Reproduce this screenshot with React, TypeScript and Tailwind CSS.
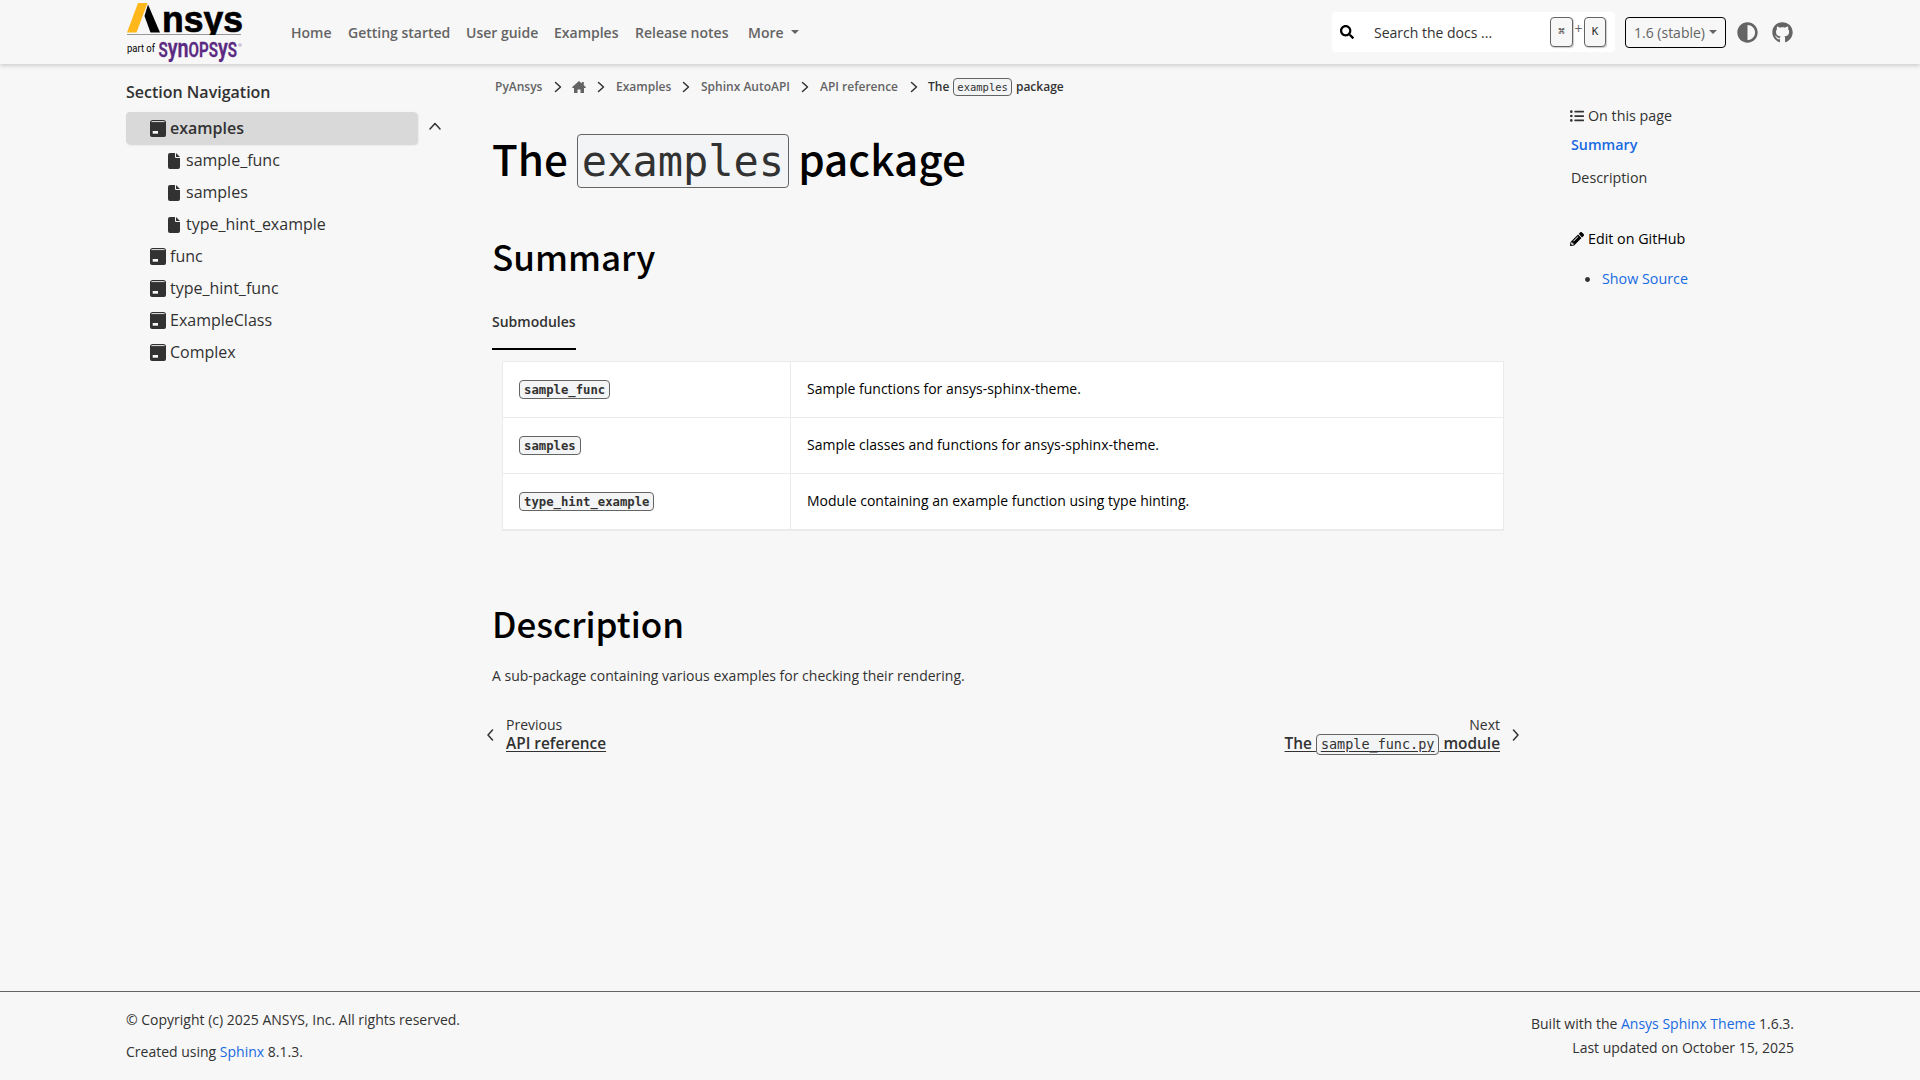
import React from "react";
import { FaCircle, FaGithub, FaListUl, FaPencilAlt, FaSearch, FaAdjust } from "react-icons/fa";

const Caret = ({ className = "" }: { className?: string }) => (
  <span className={`inline-block h-0 w-0 border-x-4 border-t-4 border-x-transparent border-t-[#646464] ${className}`} />
);

const Chevron = ({ d, className = "" }: { d: string; className?: string }) => (
  <svg viewBox="0 0 12 12" className={className} fill="none" stroke="currentColor" strokeWidth="1.5" strokeLinecap="round" strokeLinejoin="round">
    <path d={d} />
  </svg>
);

const PackageIcon = () => (
  <svg viewBox="0 0 16 17" className="mt-px h-[17px] w-4 shrink-0">
    <path d="M2.5 0h11C15 0 16 1.2 16 2.6V15q0 2-2 2H2q-2 0-2-2V2.600C0 1.2 1 0 2.500 0Z" fill="#323232" />
    <path d="M1.500 1.600h13" stroke="#f7f7f7" strokeWidth=".9" />
    <path d="M2.700 11h5.300v2.700H2.700Z" fill="#f7f7f7" />
  </svg>
);

const FileIcon = () => (
  <svg viewBox="0 0 12 16" className="mt-px h-4 w-3 shrink-0" fill="#323232">
    <path d="M2 0h5v4q0 1 1 1h4v9q0 2-2 2H2q-2 0-2-2V2Q0 0 2 0Z" />
    <path d="M8 0l4 4H8Z" />
  </svg>
);

const HomeIcon = () => (
  <svg viewBox="0 0 14 12" className="ml-[8px] h-3 w-[14px] shrink-0" fill="#646464">
    <path d="M7 0 9.800 2.500V1h2v3.300L14 6.300 13.300 7H12v5H8.500V8.500h-3V12H2V7H.7L0 6.300Z" />
  </svg>
);

const Code = ({ children, className = "" }: { children: React.ReactNode; className?: string }) => (
  <code className={`inline-block rounded-[4px] border border-[#646464] bg-[#f3f4f5] font-['DejaVu_Sans_Mono',monospace] text-[#323232] ${className}`}>{children}</code>
);

const Logo = () => (
  <svg viewBox="0 0 118 60" className="h-[60px] w-[118px] shrink-0 overflow-visible">
    <defs>
      <clipPath id="wordmark"><path d="M0-10h118v42H0Z" /></clipPath>
    </defs>
    <path d="M12 0h9.500L10.500 29.500H1Z" fill="#ffb71b" />
    <path d="M22 1.500 34 29.500h-9.500L18.500 13Z" fill="#000" />
    <path d="M1 31.500h114" stroke="#999" strokeWidth="1" />
    <text x="36" y="29.300" clipPath="url(#wordmark)" textLength="81" lengthAdjust="spacingAndGlyphs" fontFamily="Liberation Sans, sans-serif" fontWeight="700" fontSize="37.500" stroke="#000" strokeWidth=".7">nsys</text>
    <text x="1" y="49" textLength="28" lengthAdjust="spacingAndGlyphs" fontFamily="Roboto, sans-serif" fontSize="10.500">part of</text>
    <text transform="translate(32.500 54) scale(.72 1)" textLength="109" lengthAdjust="spacingAndGlyphs" fontFamily="Roboto, sans-serif" fontWeight="600" fontSize="19.500" fill="#5a2a82" stroke="#5a2a82" strokeWidth=".3">
      S<tspan fontSize="25.500">yn</tspan>OPS<tspan fontSize="25.500">y</tspan>S
    </text>
    <circle cx="114" cy="42" r="1.300" fill="none" stroke="#9b7bb5" strokeWidth=".6" />
  </svg>
);

const navItems = [
  { label: "Home", w: "w-[57px]" },
  { label: "Getting started", w: "w-[118px]" },
  { label: "User guide", w: "w-[88px]" },
  { label: "Examples", w: "w-[81px]" },
  { label: "Release notes", w: "w-[113px]" },
];

const tree = ["func", "type_hint_func", "ExampleClass", "Complex"];

const rows = [
  ["sample_func", "Sample functions for ansys-sphinx-theme."],
  ["samples", "Sample classes and functions for ansys-sphinx-theme."],
  ["type_hint_example", "Module containing an example function using type hinting."],
];

const Key = ({ children, className = "" }: { children: React.ReactNode; className?: string }) => (
  <kbd className={`flex h-[30px] items-center justify-center rounded-[4px] border border-[#646464] bg-[#f7f7f7] font-['DejaVu_Sans_Mono',monospace] text-[11px] text-[#323232] shadow-[1px_1px_1px_#ccc] ${className}`}>{children}</kbd>
);

function Header() {
  return (
    <header className="relative h-16 shrink-0 bg-[#f7f7f7] px-[126px] shadow-[0_2px_4px_0_#d0d0d0]">
      <div className="flex h-16 items-center">
        <div className="h-[60px] self-start pt-[3px]"><Logo /></div>
        <nav className="ml-[47px] flex pt-[2px] text-sm font-semibold text-[#646464]">
          {navItems.map((n) => <a key={n.label} className={`whitespace-nowrap ${n.w}`}>{n.label}</a>)}
          <a className="flex items-center">More <Caret className="mb-[2px] ml-[7px]" /></a>
        </nav>
        <div className="ml-auto mr-px flex items-center">
          <div className="flex h-10 w-[283px] items-center rounded-[4px] bg-white pl-2 pr-[9px]">
            <FaSearch className="h-[14px] w-[14px] text-black" />
            <span className="ml-5 pt-[2px] text-sm text-[#323232]">Search the docs ...</span>
            <Key className="ml-auto w-[23px]">⌘</Key>
            <span className="mb-1.5 w-[11px] text-center text-sm text-[#646464]">+</span>
            <Key className="w-[22px]">K</Key>
          </div>
          <button className="ml-[10px] flex h-[31px] w-[101px] items-center justify-center rounded-[4px] border border-black text-sm text-[#646464]">
            <span className="pt-px">1.6 (stable)</span><Caret className="ml-1" />
          </button>
          <FaAdjust className="ml-[11px] h-[21px] w-[21px] text-[#646464]" />
          <FaGithub className="ml-[14px] h-[21px] w-[21px] text-[#646464]" />
        </div>
      </div>
    </header>
  );
}

function SideNav() {
  return (
    <aside className="w-[366px] shrink-0 pt-[18px] text-[#323232]">
      <h2 className="h-[30px] text-base font-semibold leading-5">Section Navigation</h2>
      <div className="flex h-8 items-center">
        <div className="flex h-8 w-[291px] items-center gap-1 rounded-[4px] bg-[#d9d9d9] pl-6 font-semibold shadow-[1px_1px_2px_#d0d0d0]">
          <PackageIcon />examples
        </div>
        <Chevron d="M1 9 6 3.500 11 9" className="mb-1 ml-3 h-3 w-3" />
      </div>
      {["sample_func", "samples", "type_hint_example"].map((s) => (
        <div key={s} className="flex h-8 items-center pl-[42px]"><FileIcon /><span className="ml-[6px]">{s}</span></div>
      ))}
      {tree.map((t) => (
        <div key={t} className="flex h-8 items-center gap-1 pl-6"><PackageIcon />{t}</div>
      ))}
    </aside>
  );
}

const Sep = () => <Chevron d="M3.500 1.500 8.500 6 3.500 10.500" className="h-3 w-3 text-[#323232]" />;

function Breadcrumbs() {
  return (
    <div className="flex h-5 items-center pl-[3px] text-xs font-semibold text-[#646464]">
      <span className="w-[57px]">PyAnsys</span><Sep />
      <HomeIcon /><span className="w-[9px]" /><Sep />
      <span className="ml-[9px] w-[64px]">Examples</span><Sep />
      <span className="ml-[9px] w-[98px] whitespace-nowrap">Sphinx AutoAPI</span><Sep />
      <span className="ml-[9px] w-[88px] whitespace-nowrap">API reference</span><Sep />
      <span className="ml-[8px] flex items-center gap-[4px] text-[#323232]">The <Code className="h-[18px] px-[3px] text-[10.5px] font-normal leading-[17px]">examples</Code> package</span>
    </div>
  );
}

function Content() {
  return (
    <main className="w-[1028px] shrink-0 pt-[13px]">
      <Breadcrumbs />
      <h1 className="mt-[37px] flex h-[54px] items-center font-['Noto_Sans_CJK_SC',sans-serif] text-[42.2px] font-medium text-black">
        <span className="mb-[6px]">The</span>
        <Code className="ml-[9px] mr-[9px] h-[54px] px-[4px] text-[42px] font-normal leading-[53px]">examples</Code>
        <span className="mb-[6px]">package</span>
      </h1>
      <h2 className="mt-[40px] h-[56px] font-['Noto_Sans_CJK_SC',sans-serif] text-[35px] font-medium leading-[56px] text-black">Summary</h2>
      <div className="mt-[22px] h-[44px] w-[84px] border-b-2 border-black pt-px text-sm font-semibold leading-[30px] text-[#323232]">Submodules</div>
      <div className="ml-[10px] mt-[11px] w-[1002px] border-x border-b-2 border-t border-[#ebebeb] bg-white">
        {rows.map(([n, d], i) => (
          <div key={n} className={`flex items-center ${i < 2 ? "h-14 border-b border-[#ebebeb]" : "h-[55px]"}`}>
            <div className="flex h-full w-[288px] items-center border-r border-[#ebebeb] pl-4">
              <Code className="h-[19px] px-[4px] text-[12.25px] font-bold leading-[18px]">{n}</Code>
            </div>
            <p className="pb-px pl-4 text-sm text-black">{d}</p>
          </div>
        ))}
      </div>
      <h2 className="mt-[64px] h-[56px] font-['Noto_Sans_CJK_SC',sans-serif] text-[35px] font-medium leading-[56px] text-black">Description</h2>
      <p className="mt-[15px] text-sm text-[#323232]">A sub-package containing various examples for checking their rendering.</p>
      <div className="mt-[30px] flex h-[38px] items-center justify-between text-[#323232]">
        <div className="-ml-2 flex items-center">
          <Chevron d="M8.500 1 4 6 8.500 11" className="h-3 w-3" />
          <div className="ml-[10px] text-sm leading-[18px]">
            <div>Previous</div><div className="text-[15.4px] font-semibold leading-5 underline decoration-1 underline-offset-2">API reference</div>
          </div>
        </div>
        <div className="-mr-[2px] flex items-center text-right">
          <div className="mr-[10px] text-sm leading-[18px]">
            <div>Next</div>
            <div className="flex h-5 items-center text-[15.4px] font-semibold leading-5 underline decoration-1 underline-offset-2">
              <span className="whitespace-pre">The </span>
              <Code className="mt-px h-[21px] px-1 text-[13.475px] font-normal leading-[19px] underline">sample_func.py</Code>
              <span className="whitespace-pre"> module</span>
            </div>
          </div>
          <Chevron d="M3.500 1 8 6 3.500 11" className="h-3 w-3" />
        </div>
      </div>
    </main>
  );
}

function PageToc() {
  return (
    <aside className="ml-[51px] pt-[42px] text-[14.3px] leading-5 text-[#323232]">
      <div className="-ml-px flex h-5 items-center gap-1"><FaListUl className="h-[14px] w-[14px]" />On this page</div>
      <div className="mt-[9px] font-semibold text-[#186ae2]">Summary</div>
      <div className="mt-[13px]">Description</div>
      <div className="-ml-px mt-[41px] flex items-center gap-1 text-black"><FaPencilAlt className="h-[14px] w-[14px]" />Edit on GitHub</div>
      <div className="mt-5 flex items-center pl-[14px]"><FaCircle className="h-[5px] w-[5px]" /><span className="ml-[12px] text-[#186ae2]">Show Source</span></div>
    </aside>
  );
}

export default function App() {
  return (
    <div className="flex h-[1080px] w-[1920px] flex-col overflow-hidden bg-[#f7f7f7] font-['Open_Sans',sans-serif]">
      <Header />
      <div className="flex flex-1 px-[126px]"><SideNav /><Content /><PageToc /></div>
      <footer className="flex h-[89px] shrink-0 justify-between border-t border-[#646464] px-[126px] text-sm text-[#323232]">
        <div className="pt-[18px]"><p>© Copyright (c) 2025 ANSYS, Inc. All rights reserved.</p><p className="mt-3">Created using <a className="text-[#186ae2]">Sphinx</a> 8.1.3.</p></div>
        <div className="pt-5 text-right leading-6"><p>Built with the <a className="text-[#186ae2]">Ansys Sphinx Theme</a> 1.6.3.</p><p>Last updated on October 15, 2025</p></div>
      </footer>
    </div>
  );
}
